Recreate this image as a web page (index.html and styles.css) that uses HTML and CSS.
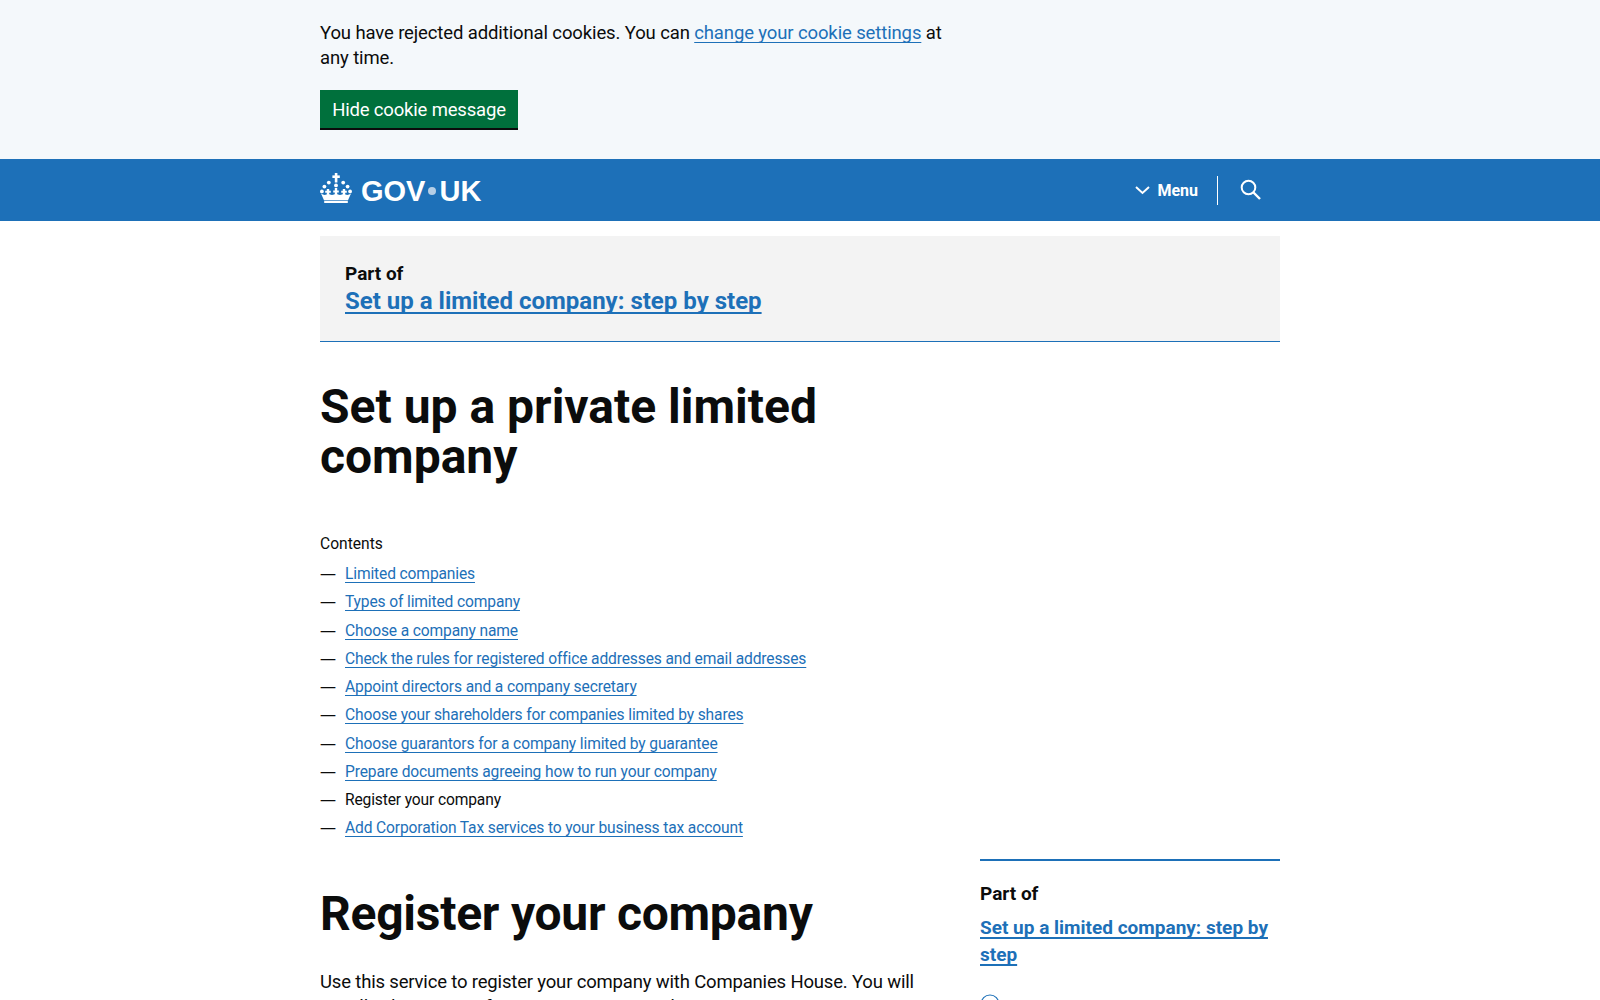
FILE: index.html
```html
<!DOCTYPE html>
<html lang="en">
<head>
<meta charset="utf-8">
<title>Set up a private limited company</title>
<link rel="stylesheet" href="styles.css">
</head>
<body>
<div class="cookie">
  <div class="wrap">
    <p class="cookie-text">You have rejected additional cookies. You can <a href="#">change your cookie settings</a> at any time.</p>
    <button class="btn">Hide cookie message</button>
  </div>
</div>
<header class="head">
  <div class="wrap head-in">
    <a class="logo" href="#">
      <svg class="crown" viewBox="0 0 32 30" width="32" height="30" aria-hidden="true">
        <g fill="#fff">
          <rect x="14.8" y="0" width="2.6" height="9.5"/><rect x="12.4" y="2.4" width="7.4" height="2.6"/>
          <circle cx="16" cy="12.4" r="1.9"/>
          <circle cx="8.8" cy="9.6" r="1.9"/><circle cx="23.2" cy="9.6" r="1.9"/>
          <circle cx="4.4" cy="13.6" r="1.9"/><circle cx="27.6" cy="13.6" r="1.9"/>
          <circle cx="1.9" cy="18.4" r="1.9"/><circle cx="30.1" cy="18.4" r="1.9"/>
          <path d="M6.8 16h2.4v5H6.8zM14.8 15h2.4v6h-2.4zM22.8 16h2.4v5h-2.4zM5.2 17.8h5.6v2H5.2zM13.2 17.4h5.6v2h-5.6zM21.2 17.8h5.6v2h-5.6z"/>
          <path d="M1 20.6 Q5 23.4 8 20.6 Q12 23.4 16 20.6 Q20 23.4 24 20.6 Q27 23.4 31 20.6 L28 27.2 H4 Z"/>
          <rect x="4.2" y="27.9" width="23.6" height="2.1"/>
        </g>
      </svg>
      <span class="logo-text">GOV<span class="dot"></span>UK</span>
    </a>
    <nav class="nav">
      <a class="menu" href="#">
        <svg width="15" height="10" viewBox="0 0 15 10" aria-hidden="true"><path d="M1 2 L7.5 8 L14 2" fill="none" stroke="#fff" stroke-width="2"/></svg>
        Menu
      </a>
      <a class="search" href="#" aria-label="Search">
        <svg width="21" height="21" viewBox="0 0 21 21" aria-hidden="true"><circle cx="8.5" cy="8.5" r="6.8" fill="none" stroke="#fff" stroke-width="2"/><path d="M13.5 13.5 L20 20" stroke="#fff" stroke-width="2.4"/></svg>
      </a>
    </nav>
  </div>
</header>
<div class="wrap">
  <div class="partof">
    <div class="partof-label">Part of</div>
    <a class="partof-link" href="#">Set up a limited company: step by step</a>
  </div>
  <h1 class="title">Set up a private limited company</h1>
  <div class="contents">
    <div class="contents-title">Contents</div>
    <ul class="contents-list">
      <li><a href="#">Limited companies</a></li>
      <li><a href="#">Types of limited company</a></li>
      <li><a href="#">Choose a company name</a></li>
      <li><a href="#">Check the rules for registered office addresses and email addresses</a></li>
      <li><a href="#">Appoint directors and a company secretary</a></li>
      <li><a href="#">Choose your shareholders for companies limited by shares</a></li>
      <li><a href="#">Choose guarantors for a company limited by guarantee</a></li>
      <li><a href="#">Prepare documents agreeing how to run your company</a></li>
      <li>Register your company</li>
      <li><a href="#">Add Corporation Tax services to your business tax account</a></li>
    </ul>
  </div>
  <div class="columns">
    <main class="body">
      <h2 class="section">Register your company</h2>
      <p class="para">Use this service to register your company with Companies House. You will usually also register for Corporation Tax at the same time.</p>
    </main>
    <aside class="side">
      <div class="side-label">Part of</div>
      <a class="side-link" href="#">Set up a limited company: step by step</a>
      <div class="side-step"><svg width="20" height="20" viewBox="0 0 20 20" aria-hidden="true"><circle cx="10" cy="10" r="9" fill="none" stroke="#1d70b8" stroke-width="1.2"/></svg></div>
    </aside>
  </div>
</div>
</body>
</html>
```
FILE: styles.css
```css
* { box-sizing: border-box; }
html, body { margin: 0; padding: 0; }
body { font-family: Roboto, "Noto Sans", sans-serif; color: #0b0c0c; background: #fff; font-size: 19px; line-height: 25px; }
a { color: #1d70b8; text-underline-offset: 2.5px; text-decoration-thickness: 1px; text-decoration-skip-ink: none; }
.wrap { width: 960px; margin: 0 auto; }
.cookie { background: #f4f8fb; height: 159px; padding-top: 21px; }
.cookie-text { margin: 0 0 19px; width: 630px; font-size: 18.5px; letter-spacing: -0.12px; }
.btn { display: block; width: 198px; height: 38px; border: 0; background: #00703c; box-shadow: 0 2px 0 #0b0c0c; color: #fff; font: inherit; font-size: 18.5px; letter-spacing: -0.17px; padding: 2px 0 0; }
.head { background: #1d70b8; height: 62px; }
.head-in { display: flex; justify-content: space-between; align-items: center; height: 62px; padding-right: 19px; }
.logo { display: flex; align-items: center; gap: 9px; color: #fff; text-decoration: none; }
.crown { margin-top: -4px; }
.logo-text { font-family: "Liberation Sans", sans-serif; font-weight: 700; font-size: 29px; display: flex; align-items: center; padding-top: 2px; }
.dot { width: 8px; height: 8px; border-radius: 50%; background: #b5cee6; margin: 0 3px; }
.nav { display: flex; align-items: center; height: 30px; }
.menu { display: flex; align-items: center; gap: 7px; color: #fff; font-weight: 700; font-size: 16px; text-decoration: none; padding-right: 19px; border-right: 1px solid #fff; height: 29px; }
.search { display: flex; padding: 0 0 2px 22px; }
.partof { margin-top: 15px; background: #f3f3f3; height: 106px; padding: 26px 25px 0; border-bottom: 1px solid #1d70b8; }
.partof-label { font-weight: 700; font-size: 19px; line-height: 24px; }
.partof-link { font-weight: 700; font-size: 24px; line-height: 30px; text-decoration-thickness: 2px; }
.title { margin: 40px 0 0; width: 600px; font-size: 48px; line-height: 50px; font-weight: 700; }
.contents { margin-top: 52px; }
.contents-title { font-size: 15.6px; line-height: 20px; }
.contents-list { list-style: none; margin: 6px 0 0; padding: 0; font-size: 15.6px; letter-spacing: -0.14px; line-height: 20px; }
.contents-list li { position: relative; padding: 4px 0 4.25px 25px; }
.contents-list li::before { content: "—"; position: absolute; left: 0; top: 3px; font-family: "Noto Sans", sans-serif; font-size: 16px; letter-spacing: 0; }
.columns { display: grid; grid-template-columns: 620px 300px; column-gap: 40px; margin-top: 16px; }
.section { margin: 30px 0 0; font-size: 48px; line-height: 50px; font-weight: 700; letter-spacing: -0.25px; }
.para { margin: 31px 0 0; font-size: 18.5px; letter-spacing: -0.17px; }
.side { border-top: 2px solid #1d70b8; padding-top: 20px; }
.side-label { font-weight: 700; font-size: 19px; line-height: 25px; }
.side-link { display: block; margin-top: 8px; font-weight: 700; font-size: 19px; line-height: 27px; text-decoration-thickness: 2px; }
.side-step { margin-top: 26px; height: 20px; }
```
